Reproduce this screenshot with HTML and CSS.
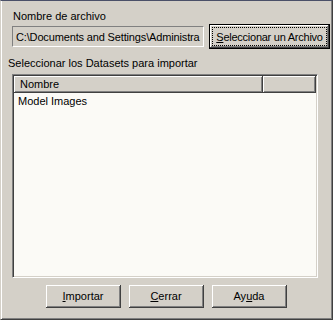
FILE: index.html
```html
<!DOCTYPE html>
<html lang="es">
<head>
  <meta charset="UTF-8">
  <title>Importar Datasets</title>
  <link rel="stylesheet" href="styles.css">
</head>
<body>
  <div class="dialog">
    <div class="label file-label">Nombre de archivo</div>
    <div class="file-row">
      <div class="path-field">C:\Documents and Settings\Administra</div>
      <button class="btn btn-default"><span class="focus"><u>S</u>eleccionar un Archivo</span></button>
    </div>

    <div class="label list-label">Seleccionar los Datasets para importar</div>
    <div class="list">
      <div class="list-header">
        <div class="col col-name">Nombre</div>
        <div class="col col-extra"></div>
      </div>
      <div class="list-body">
        <div class="item">Model Images</div>
      </div>
    </div>

    <div class="actions">
      <button class="btn"><u>I</u>mportar</button>
      <button class="btn"><u>C</u>errar</button>
      <button class="btn">Ay<u>u</u>da</button>
    </div>
  </div>
</body>
</html>
```

FILE: styles.css
```css
:root {
  --face: #d4d0c8;
  --shadow: #808080;
  --dark: #404040;
  --light: #ffffff;
  --window: #fbfaf6;
}

* {
  margin: 0;
  padding: 0;
  box-sizing: border-box;
}

body {
  width: 333px;
  height: 320px;
  background: var(--face);
  font-family: 'Liberation Sans', Arial, sans-serif;
  font-size: 11px;
  color: #000;
  overflow: hidden;
}

.dialog {
  width: 333px;
  height: 320px;
  border-top: 1px solid #4a5068;
  border-left: 1px solid var(--face);
  border-right: 1px solid var(--dark);
  border-bottom: 1px solid var(--dark);
  box-shadow: inset 1px 0 0 var(--light), inset -1px -1px 0 var(--shadow);
  display: flex;
  flex-direction: column;
}

.label {
  line-height: 13px;
  white-space: nowrap;
}

.file-label {
  margin: 9px 0 0 12px;
}

.file-row {
  display: flex;
  align-items: center;
  gap: 5px;
  margin: 1px 0 0 11px;
  height: 25px;
}

.path-field {
  width: 192px;
  height: 21px;
  padding: 3px 0 0 3px;
  line-height: 14px;
  letter-spacing: -0.15px;
  white-space: nowrap;
  overflow: hidden;
  background: var(--face);
  border-top: 1px solid var(--shadow);
  border-left: 1px solid var(--shadow);
  border-right: 1px solid var(--light);
  border-bottom: 1px solid var(--light);
}

.btn {
  width: 75px;
  height: 23px;
  font-family: inherit;
  font-size: 11px;
  color: #000;
  background: var(--face);
  border: none;
  box-shadow:
    inset -1px -1px 0 var(--dark),
    inset 1px 1px 0 var(--light),
    inset -2px -2px 0 var(--shadow);
  display: flex;
  align-items: center;
  justify-content: center;
  padding-bottom: 1px;
}

.btn-default {
  width: 121px;
  height: 25px;
  border: 1px solid #000;
  padding: 2px;
}

.btn-default .focus {
  flex: 1;
  align-self: stretch;
  border: 1px dotted #000;
  display: flex;
  align-items: center;
  justify-content: center;
  white-space: nowrap;
  letter-spacing: -0.25px;
}

.list-label {
  margin: 8px 0 0 7px;
}

.list {
  width: 306px;
  height: 204px;
  margin: 4px 0 0 11px;
  background: var(--window);
  border-top: 1px solid var(--shadow);
  border-left: 1px solid var(--shadow);
  border-right: 1px solid var(--light);
  border-bottom: 1px solid var(--light);
  box-shadow: inset 1px 1px 0 var(--dark), inset -1px -1px 0 var(--face);
  padding: 1px;
  display: flex;
  flex-direction: column;
}

.list-header {
  display: flex;
  height: 17px;
}

.col {
  height: 17px;
  background: var(--face);
  box-shadow:
    inset -1px -1px 0 var(--dark),
    inset 1px 1px 0 var(--light),
    inset -2px -2px 0 var(--shadow);
  padding: 2px 0 0 6px;
  line-height: 13px;
}

.col-name {
  width: 249px;
}

.col-extra {
  flex: 1;
}

.list-body {
  flex: 1;
  padding: 1px 0 0 4px;
}

.item {
  line-height: 14px;
}

.actions {
  display: flex;
  justify-content: center;
  gap: 8px;
  margin-top: 7px;
  padding-right: 1px;
}
```
